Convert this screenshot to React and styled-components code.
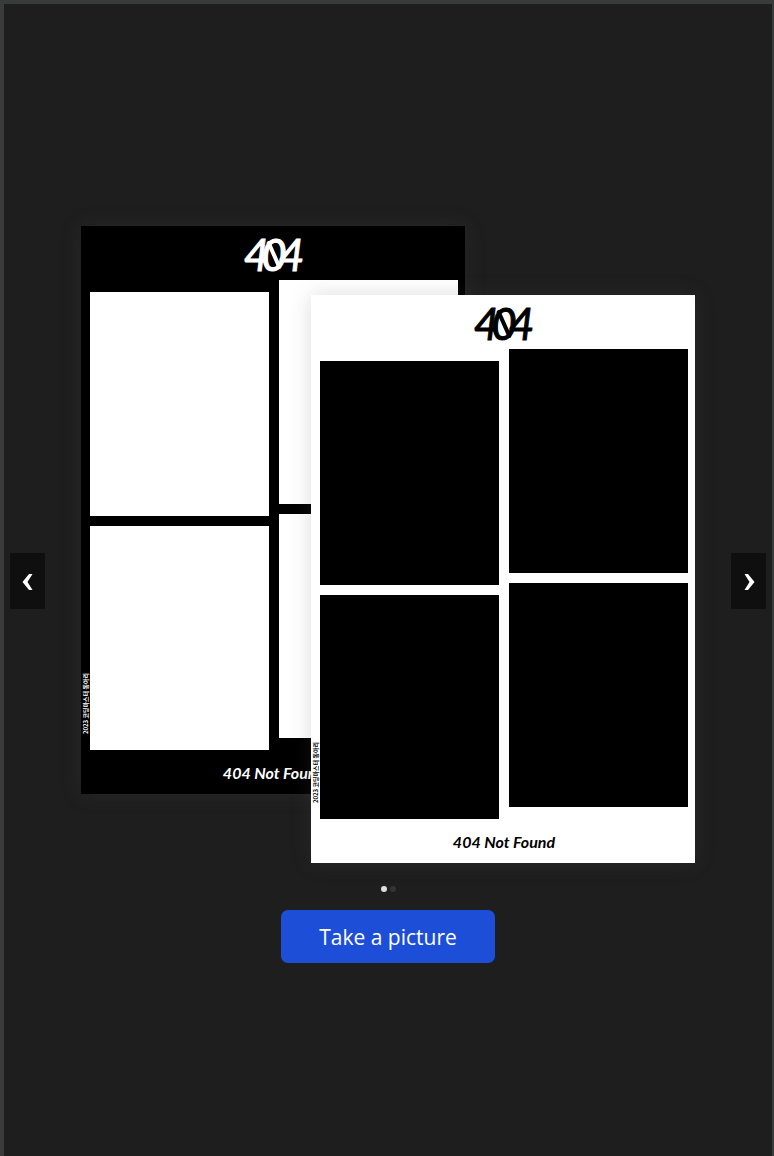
import React from "react";
import styled, { createGlobalStyle } from "styled-components";

const GlobalStyle = createGlobalStyle`
  *, *::before, *::after { box-sizing: border-box; }
  body {
    margin: 0;
    background: #1e1e1e;
    font-family: "Open Sans", "Noto Sans CJK KR", sans-serif;
  }
`;

const Page = styled.main`
  min-height: 100vh;
  display: grid;
  grid-template-columns: 35px minmax(0, 1fr) 35px;
  align-items: center;
  padding: 2px 6px 0;
  border: solid #3a3b3b;
  border-width: 4px 2px 0 4px;
  background: #1e1e1e;
`;

const ArrowButton = styled.button`
  display: flex;
  align-items: center;
  justify-content: center;
  height: 56px;
  padding: 2px 0 0;
  border: 0;
  background: #0f0f0f;
  color: #fff;
  cursor: pointer;
`;

const Content = styled.section`
  display: flex;
  flex-direction: column;
  align-items: center;
  padding-top: 26px;
`;

const FrameStack = styled.div`
  display: grid;
  width: 100%;
  max-width: 614px;
`;

const FrameCard = styled.article`
  grid-area: 1 / 1;
  position: relative;
  justify-self: ${({ $front }) => ($front ? "end" : "start")};
  width: 63%;
  max-width: 384px;
  margin-top: ${({ $front }) => ($front ? "69px" : "0")};
  margin-bottom: ${({ $front }) => ($front ? "0" : "69px")};
  padding: 0 7px 0 9px;
  background: ${({ $front }) => ($front ? "#fff" : "#000")};
  color: ${({ $front }) => ($front ? "#000" : "#fff")};
  box-shadow: 0 0 20px rgba(80, 80, 80, 0.2);
`;

const FrameTitle = styled.h2`
  height: 54px;
  margin: 0;
  text-align: center;
  font: italic 400 44px/56px Lato, sans-serif;
  -webkit-text-stroke: 1px currentColor;
`;

const SlashedZero = styled.span`
  position: relative;
  display: inline-block;
  margin: 0 -8px;
  &::after {
    content: "";
    position: absolute;
    left: 50%;
    top: 50%;
    width: 4px;
    height: 30px;
    margin: -14px 0 0 -2px;
    border-radius: 2px;
    background: currentColor;
    transform: rotate(-24deg);
  }
`;

const PhotoGrid = styled.div`
  display: grid;
  grid-template-columns: 1fr 1fr;
  gap: 10px;
`;

const PhotoColumn = styled.div`
  display: grid;
  gap: 10px;
  padding-top: ${({ $lowered }) => ($lowered ? "12px" : "0")};
  align-content: start;
`;

const Photo = styled.div`
  aspect-ratio: 179 / 224;
  background: currentColor;
`;

const FrameFooter = styled.p`
  height: 44px;
  margin: 0;
  text-align: center;
  font: italic 700 16px/46px Lato, sans-serif;
`;

const Credit = styled.small`
  position: absolute;
  left: 0;
  bottom: 59px;
  writing-mode: vertical-rl;
  text-orientation: sideways;
  transform: rotate(180deg);
  white-space: nowrap;
  font: 700 6px/9px "Noto Sans CJK KR", sans-serif;
`;

const Dots = styled.div`
  display: flex;
  gap: 3px;
  margin-top: 23px;
`;

const Dot = styled.button`
  width: 6px;
  height: 6px;
  padding: 0;
  border: 0;
  border-radius: 50%;
  background: ${({ $active }) => ($active ? "#dedede" : "#343434")};
`;

const CaptureButton = styled.button`
  margin-top: 18px;
  padding: 11px 38px 9px;
  border: 0;
  border-radius: 7px;
  background: #1d4ed8;
  color: #fff;
  font: 400 21px/33px "Open Sans", sans-serif;
  cursor: pointer;
`;

function Frame({ front }) {
  return (
    <FrameCard $front={front}>
      <FrameTitle>
        4<SlashedZero>0</SlashedZero>4
      </FrameTitle>
      <PhotoGrid>
        <PhotoColumn $lowered>
          <Photo />
          <Photo />
        </PhotoColumn>
        <PhotoColumn>
          <Photo />
          <Photo />
        </PhotoColumn>
      </PhotoGrid>
      <FrameFooter>404 Not Found</FrameFooter>
      <Credit>2023 코딩마스터 동아리</Credit>
    </FrameCard>
  );
}

function Chevron({ points }) {
  return (
    <svg width="12" height="18" viewBox="0 0 12 18" aria-hidden="true">
      <path d={points} fill="currentColor" />
    </svg>
  );
}

export default function App() {
  return (
    <>
      <GlobalStyle />
      <Page>
        <ArrowButton type="button" aria-label="Previous frame">
          <Chevron points="M7 1h3.500L5.500 9l5 8H7L.5 9z" />
        </ArrowButton>
        <Content>
          <FrameStack>
            <Frame />
            <Frame front />
          </FrameStack>
          <Dots>
            <Dot type="button" aria-label="Slide 1" $active />
            <Dot type="button" aria-label="Slide 2" />
          </Dots>
          <CaptureButton type="button">Take a picture</CaptureButton>
        </Content>
        <ArrowButton type="button" aria-label="Next frame">
          <Chevron points="M5 1H1.500L6.500 9l-5 8H5l6.500-8z" />
        </ArrowButton>
      </Page>
    </>
  );
}
